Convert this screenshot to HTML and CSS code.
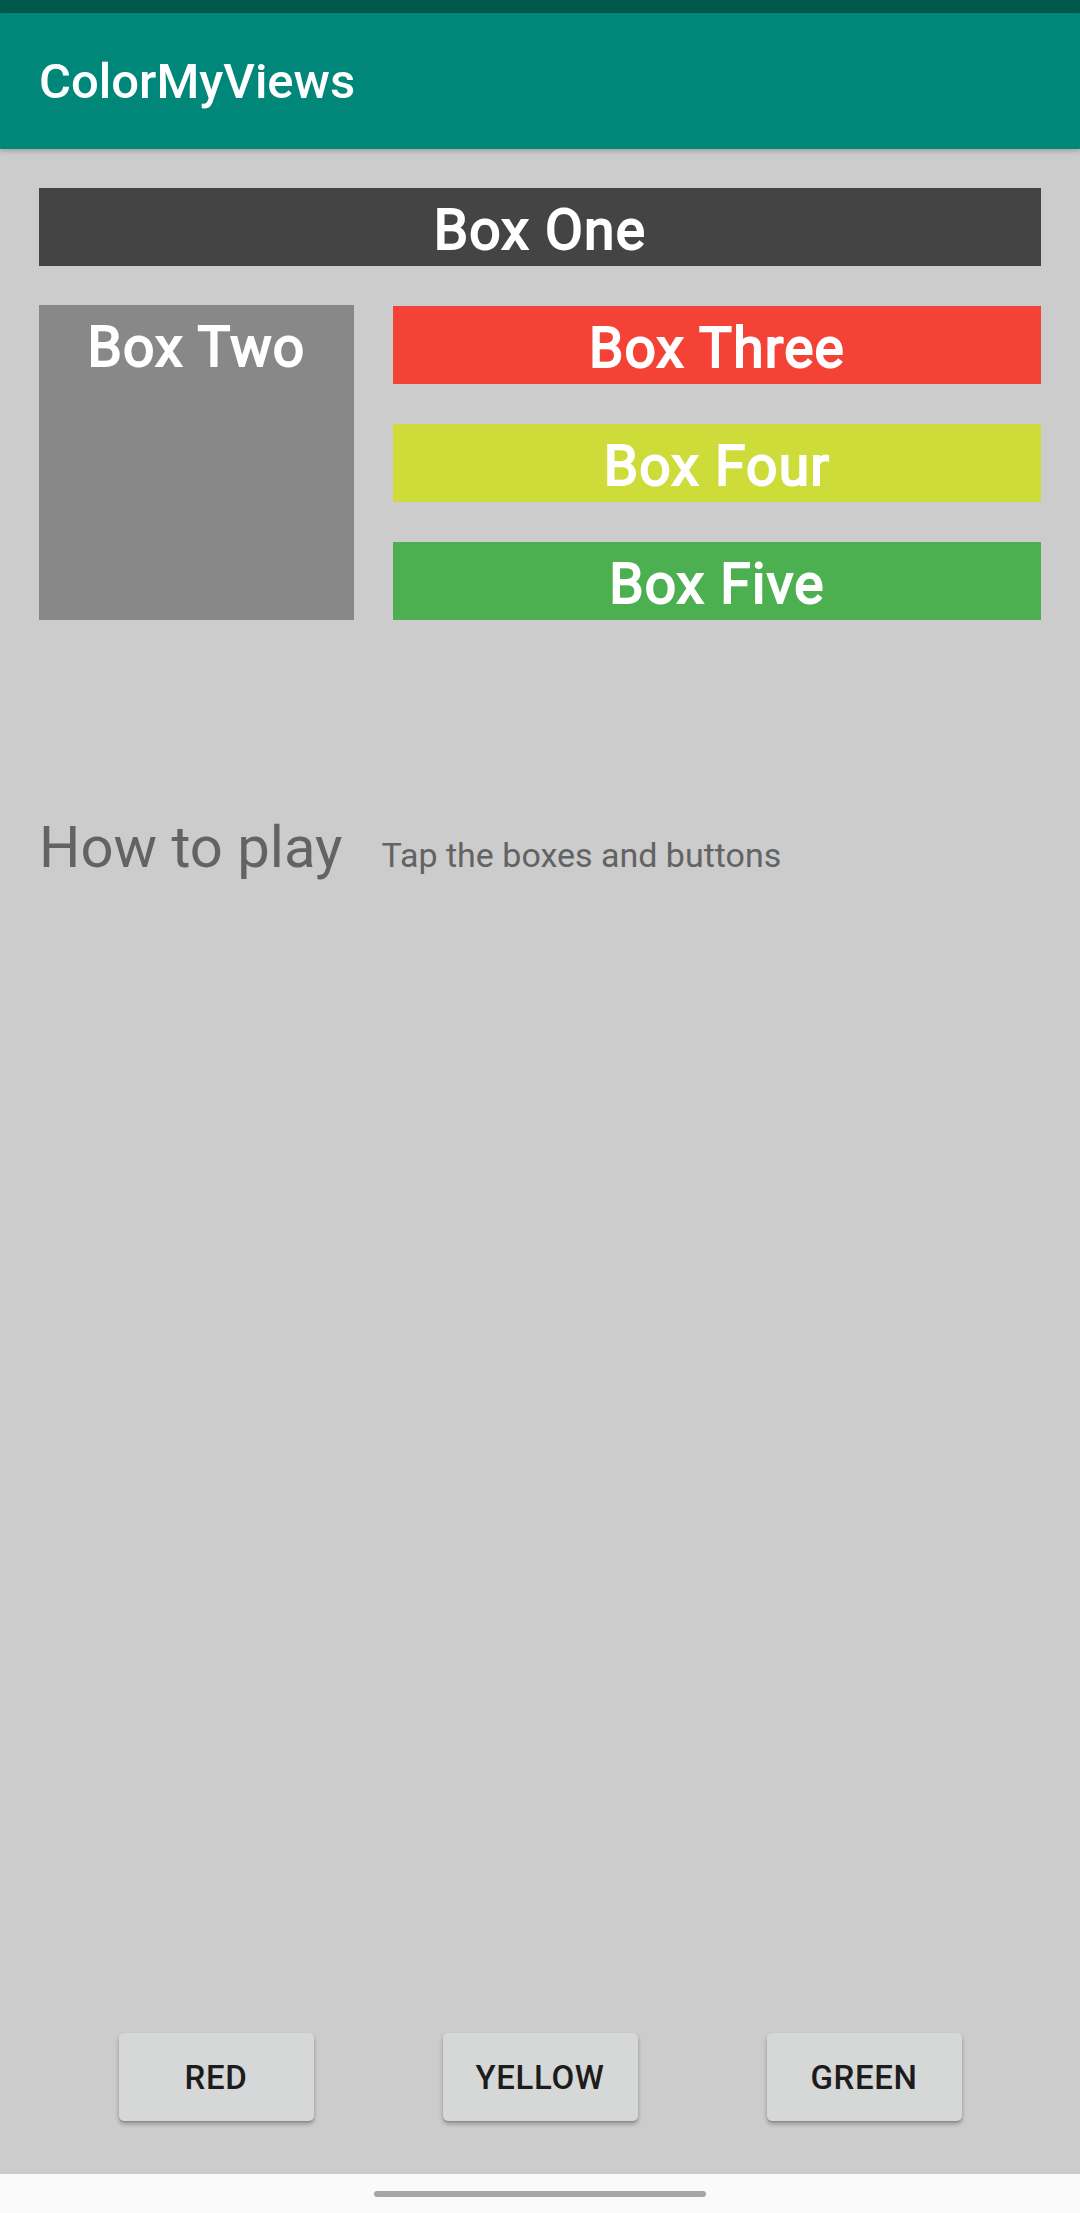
FILE: index.html
```html
<!DOCTYPE html>
<html lang="en">
<head>
<meta charset="utf-8">
<title>ColorMyViews</title>
<link rel="stylesheet" href="styles.css">
</head>
<body>
<div class="screen">
  <div class="status-bar"></div>
  <header class="app-bar">
    <h1 class="app-title">ColorMyViews</h1>
  </header>
  <main class="content">
    <div class="box box-one">Box One</div>
    <div class="box-row">
      <div class="box box-two">Box Two</div>
      <div class="box-column">
        <div class="box box-three">Box Three</div>
        <div class="box box-four">Box Four</div>
        <div class="box box-five">Box Five</div>
      </div>
    </div>
    <div class="info-row">
      <span class="info-label">How to play</span>
      <span class="info-text">Tap the boxes and buttons</span>
    </div>
    <div class="button-row">
      <button class="color-button">RED</button>
      <button class="color-button">YELLOW</button>
      <button class="color-button">GREEN</button>
    </div>
  </main>
  <footer class="nav-bar">
    <div class="nav-handle"></div>
  </footer>
</div>
</body>
</html>
```

FILE: styles.css
```css
* {
  box-sizing: border-box;
}

html, body {
  margin: 0;
  padding: 0;
}

body {
  font-family: Roboto, "Noto Sans", "Liberation Sans", sans-serif;
  background: #cccccc;
}

.screen {
  width: 1080px;
  height: 2213px;
  display: flex;
  flex-direction: column;
  background: #cccccc;
  overflow: hidden;
}

.status-bar {
  height: 13px;
  background: #00594d;
  flex: none;
}

.app-bar {
  height: 136px;
  flex: none;
  background: #00877a;
  display: flex;
  align-items: center;
  padding-left: 39px;
  box-shadow: 0 2px 5px rgba(0, 0, 0, 0.22);
  position: relative;
  z-index: 1;
}

.app-title {
  margin: 0;
  font-size: 49px;
  font-weight: 500;
  color: #ffffff;
  line-height: 56px;
  padding-top: 2px;
}

.content {
  flex: 1;
  display: flex;
  flex-direction: column;
  padding: 39px 39px 53px 39px;
}

.box {
  height: 78px;
  line-height: 72px;
  padding-top: 6px;
  color: #ffffff;
  font-size: 55px;
  font-weight: 400;
  -webkit-text-stroke: 2px #ffffff;
  letter-spacing: 1.3px;
  text-align: center;
}

.box-one {
  background: #444444;
}

.box-row {
  display: flex;
  gap: 39px;
  margin-top: 39px;
}

.box-two {
  width: 315px;
  height: 315px;
  background: #888888;
  flex: none;
}

.box-column {
  flex: 1;
  display: flex;
  flex-direction: column;
  gap: 40px;
  padding-top: 1px;
}

.box-three {
  background: #f44336;
}

.box-four {
  background: #cddc39;
}

.box-five {
  background: #4caf50;
}

.info-row {
  display: flex;
  align-items: baseline;
  margin-top: 193px;
  color: #636363;
}

.info-label {
  font-size: 58px;
  font-weight: 400;
  line-height: 68px;
}

.info-text {
  font-size: 34px;
  font-weight: 400;
  margin-left: 39px;
}

.button-row {
  margin-top: auto;
  display: flex;
  justify-content: center;
  gap: 129px;
}

.color-button {
  width: 195px;
  height: 88px;
  border: none;
  border-radius: 5px;
  background: #d6d7d7;
  color: #1c1c1c;
  font-family: Roboto, "Noto Sans", "Liberation Sans", sans-serif;
  font-size: 33px;
  font-weight: 500;
  letter-spacing: 0.6px;
  padding: 0;
  box-shadow: 0 3px 4px rgba(0, 0, 0, 0.28), 0 1px 1px rgba(0, 0, 0, 0.12);
}

.nav-bar {
  height: 39px;
  flex: none;
  background: #fafafa;
  display: flex;
  justify-content: center;
  padding-top: 17px;
}

.nav-handle {
  width: 332px;
  height: 6px;
  border-radius: 3px;
  background: #a6a6a6;
}
```
